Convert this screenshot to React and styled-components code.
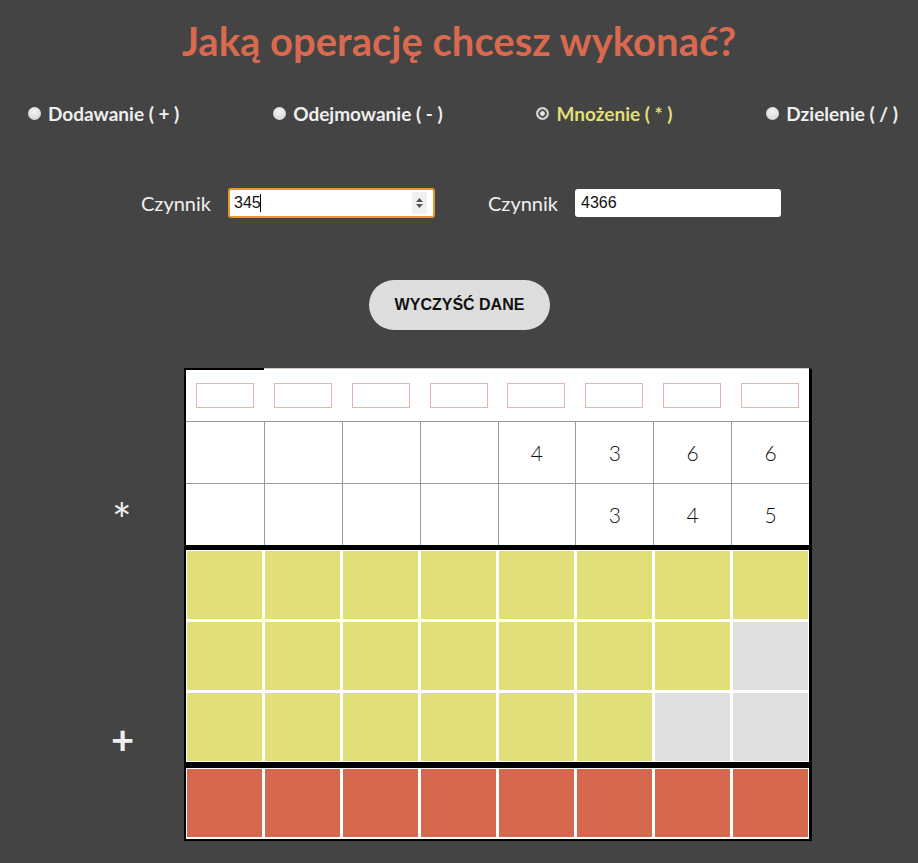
import React from "react";
import styled, { createGlobalStyle } from "styled-components";

const GlobalStyle = createGlobalStyle`
  body {
    margin: 0;
    background-color: #444444;
    font-family: Lato, "Open Sans", sans-serif;
  }
`;

const OPERATIONS = [
  { label: "Dodawanie ( + )", checked: false },
  { label: "Odejmowanie ( - )", checked: false },
  { label: "Mnożenie ( * )", checked: true },
  { label: "Dzielenie ( / )", checked: false },
];

const TOP = ["", "", "", "", "4", "3", "6", "6"];
const BOTTOM = ["", "", "", "", "", "3", "4", "5"];

// number of gray (unused) cells at the right end of each partial row
const PARTIALS = [0, 1, 2];

export default function App() {
  return (
    <Page>
      <GlobalStyle />
      <Title>Jaką operację chcesz wykonać?</Title>

      <RadioRow>
        {OPERATIONS.map((op) => (
          <RadioLabel key={op.label} $active={op.checked}>
            <Radio type="radio" name="op" defaultChecked={op.checked} />
            {op.label}
          </RadioLabel>
        ))}
      </RadioRow>

      <FieldsRow>
        <Field>
          <FieldLabel>Czynnik</FieldLabel>
          <InputBox $focused>
            <Input defaultValue="345" />
            <Caret />
            <Spinner>
              <svg width="9" height="14" viewBox="0 0 9 14">
                <path d="M1 6 L4.5 2 L8 6 Z" fill="#555" />
                <path d="M1 8 L4.5 12 L8 8 Z" fill="#555" />
              </svg>
            </Spinner>
          </InputBox>
        </Field>
        <Field>
          <FieldLabel>Czynnik</FieldLabel>
          <InputBox>
            <Input defaultValue="4366" $grow />
          </InputBox>
        </Field>
      </FieldsRow>

      <ButtonRow>
        <ClearButton>WYCZYŚĆ DANE</ClearButton>
      </ButtonRow>

      <Board>
        <SignColumn>
          <Sign $row={3}>*</Sign>
          <Sign $row={7} $plus>+</Sign>
        </SignColumn>

        <Table>
          <TopRow>
            {TOP.map((_, i) => (
              <TopCell key={i} $first={i === 0}>
                <CarryBox />
              </TopCell>
            ))}
          </TopRow>
          <DigitRow>
            {TOP.map((d, i) => (
              <DigitCell key={i}>{d}</DigitCell>
            ))}
          </DigitRow>
          <DigitRow>
            {BOTTOM.map((d, i) => (
              <DigitCell key={i}>{d}</DigitCell>
            ))}
          </DigitRow>

          <Divider />

          <ColorGrid>
            {PARTIALS.map((empty, r) =>
              TOP.map((_, i) => (
                <ColorCell key={r + "-" + i} $color={i >= 8 - empty ? "#dfdfdf" : "#e1df79"} />
              ))
            )}
          </ColorGrid>

          <Divider $thick />

          <ColorGrid>
            {TOP.map((_, i) => (
              <ColorCell key={i} $color="#d6684f" />
            ))}
          </ColorGrid>
        </Table>
      </Board>
    </Page>
  );
}

const Page = styled.div`
  width: 918px;
  padding-bottom: 22px;
`;

const Title = styled.h1`
  margin: 0;
  padding-top: 18px;
  text-align: center;
  font-family: Lato, sans-serif;
  font-weight: 700;
  font-size: 40px;
  line-height: 46px;
  color: #d9694f;
`;

const RadioRow = styled.div`
  display: flex;
  justify-content: space-between;
  align-items: center;
  margin-top: 37px;
  padding: 0 20px 0 28px;
  height: 24px;
`;

const RadioLabel = styled.label`
  display: flex;
  align-items: center;
  gap: 7px;
  font-family: Lato, sans-serif;
  font-weight: 700;
  font-size: 19px;
  color: ${(p) => (p.$active ? "#e1df79" : "#efefef")};
`;

const Radio = styled.input`
  appearance: none;
  margin: 0;
  width: 13px;
  height: 13px;
  border-radius: 50%;
  background: radial-gradient(circle at 50% 35%, #f4f4f4, #cfcfcf);
  &:checked {
    background: radial-gradient(circle, #e6e6e6 0 2px, #555 2.5px 4px, #d4d4d4 4.5px);
  }
`;

const FieldsRow = styled.div`
  display: flex;
  justify-content: center;
  gap: 53px;
  margin-top: 63px;
  padding-left: 4px;
`;

const Field = styled.div`
  display: flex;
  align-items: center;
  gap: 17px;
`;

const FieldLabel = styled.span`
  font-family: Lato, sans-serif;
  font-size: 20px;
  color: #efefef;
`;

const InputBox = styled.div`
  display: flex;
  align-items: center;
  box-sizing: border-box;
  background: #fff;
  border-radius: 3px;
  border: ${(p) => (p.$focused ? "2px solid #e49a2b" : "none")};
  height: ${(p) => (p.$focused ? "30px" : "28px")};
  width: ${(p) => (p.$focused ? "207px" : "206px")};
  padding: 0 6px 0 ${(p) => (p.$focused ? "4px" : "6px")};
`;

const Input = styled.input`
  border: none;
  outline: none;
  padding: 0;
  width: 26px;
  flex: ${(p) => (p.$grow ? 1 : "none")};
  font-family: "Liberation Sans", Arial, sans-serif;
  font-size: 16px;
  color: #111;
  background: transparent;
`;

const Caret = styled.span`
  width: 1px;
  height: 18px;
  background: #000;
  margin-right: auto;
`;

const Spinner = styled.span`
  display: flex;
  align-items: center;
  justify-content: center;
  width: 15px;
  height: 22px;
  background: #f0f0f0;
`;

const ButtonRow = styled.div`
  display: flex;
  justify-content: center;
  margin-top: 62px;
  padding-left: 1px;
`;

const ClearButton = styled.button`
  width: 181px;
  height: 50px;
  border: none;
  border-radius: 25px;
  background: #dddddd;
  font-family: "Liberation Sans", Arial, sans-serif;
  font-weight: 700;
  font-size: 16px;
  color: #111;
`;

const Board = styled.div`
  display: flex;
  justify-content: center;
  margin-top: 38px;
`;

const SignColumn = styled.div`
  width: 78px;
  display: grid;
  grid-template-rows: 53px 62px 61px 6px 71px 71px 71px 6px 72px;
`;

const Sign = styled.div`
  grid-row: ${(p) => p.$row};
  display: flex;
  align-items: ${(p) => (p.$plus ? "flex-end" : "center")};
  padding-left: ${(p) => (p.$plus ? "5px" : "6px")};
  padding-bottom: ${(p) => (p.$plus ? "4px" : "0")};
  padding-top: ${(p) => (p.$plus ? "0" : "12px")};
  font-family: Lato, sans-serif;
  font-weight: ${(p) => (p.$plus ? 700 : 400)};
  font-size: ${(p) => (p.$plus ? "40px" : "46px")};
  line-height: 1;
  color: #eeeeee;
`;

const Table = styled.div`
  width: 623px;
  background: #fff;
  border-left: 2px solid #000;
  border-right: 3px solid #000;
  border-bottom: 2px solid #000;
  border-top-right-radius: 3px;
`;

const TopRow = styled.div`
  display: grid;
  grid-template-columns: repeat(8, 1fr);
  height: 53px;
`;

const TopCell = styled.div`
  display: flex;
  align-items: center;
  justify-content: center;
  box-sizing: border-box;
  border-top: ${(p) => (p.$first ? "2px solid #000" : "1px solid #cccccc")};
  margin-left: ${(p) => (p.$first ? "-2px" : "0")};
  padding-left: ${(p) => (p.$first ? "2px" : "0")};
`;

const CarryBox = styled.div`
  width: 56px;
  height: 23px;
  border: 1px solid #e8b3b3;
`;

const DigitRow = styled.div`
  display: grid;
  grid-template-columns: repeat(8, 1fr);
  height: 61px;
  border-top: 1px solid #999;
`;

const DigitCell = styled.div`
  display: flex;
  align-items: center;
  justify-content: center;
  border-left: 1px solid #999;
  font-family: Lato, sans-serif;
  font-weight: 300;
  font-size: 21px;
  color: #111;
  &:first-child {
    border-left: none;
  }
`;

const Divider = styled.div`
  height: ${(p) => (p.$thick ? "6px" : "5px")};
  background: #000;
`;

const ColorGrid = styled.div`
  display: grid;
  grid-template-columns: repeat(8, 1fr);
  grid-auto-rows: 68px;
  gap: 3px;
  padding: 1px;
  background: #fff;
`;

const ColorCell = styled.div`
  background: ${(p) => p.$color};
`;
